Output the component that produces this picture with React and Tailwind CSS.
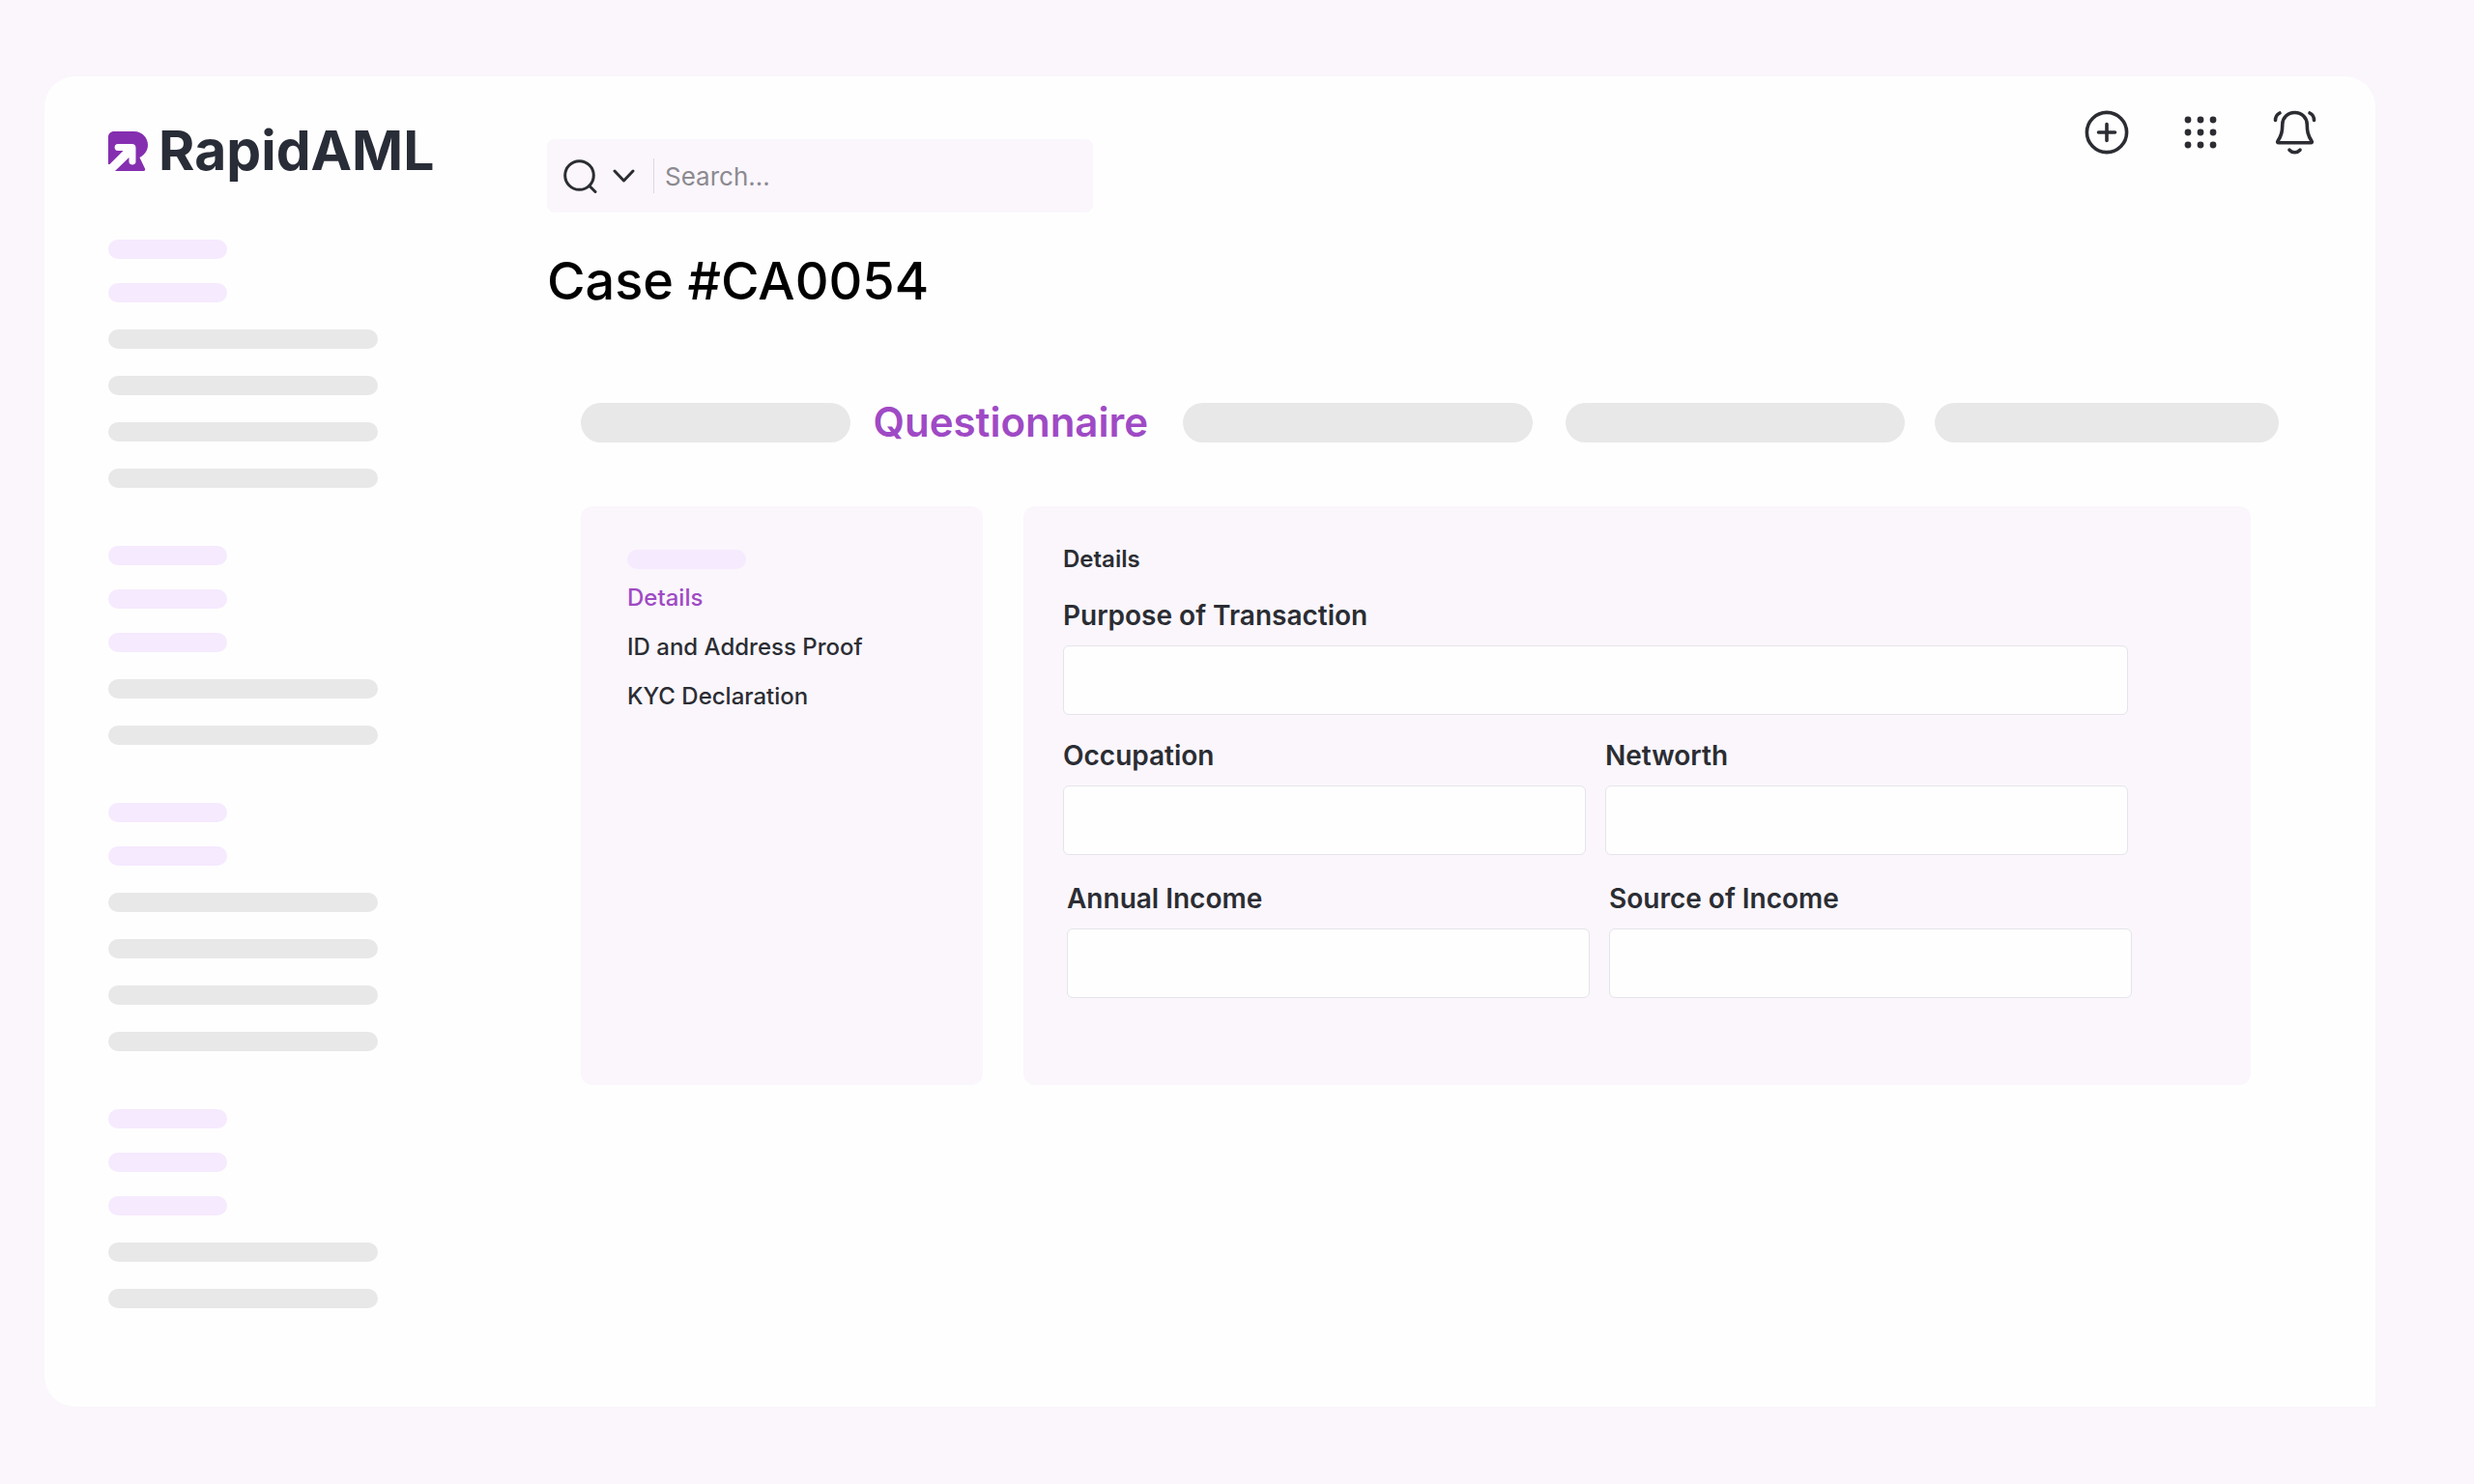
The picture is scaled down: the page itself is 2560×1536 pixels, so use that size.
import React, { useState } from 'react';

const MENU_GROUPS = [
  { short: 2, long: 4 },
  { short: 3, long: 2 },
  { short: 2, long: 4 },
  { short: 3, long: 2 },
];

const SECTIONS = ['Details', 'ID and Address Proof', 'KYC Declaration'];

const range = (n) => Array.from({ length: n }, (_, i) => i);

const Logo = () => (
  <div className="flex items-center gap-[11px]">
    <svg viewBox="0 0 41 41" className="w-[41px] h-[41px]" aria-hidden="true">
      <path
        d="M6 0H27C35 0 41 6.500 41 14C41 20 37.500 24.500 32.500 27L38 38.500C38.600 40 38 41 36.500 41H7L21.500 27V31.500C21.500 35.500 28.500 35.500 28.500 31.500V17C28.500 14.300 27 13 24.500 13H10C5.500 13 5.500 20 10 20H15.500L1.500 34H0V6C0 2.500 2.500 0 6 0Z"
        fill="#852fb0"
      />
    </svg>
    <span className="text-[57px] leading-[56px] font-bold text-[#292d37]">RapidAML</span>
  </div>
);

const Sidebar = () => (
  <aside className="w-[520px] shrink-0 pl-[66px] pt-[49px]">
    <Logo />
    <div className="mt-16 flex flex-col gap-[60px]">
      {MENU_GROUPS.map((group, g) => (
        <div key={g} className="flex flex-col gap-7">
          <div className="flex flex-col gap-[25px]">
            {range(group.short).map((i) => (
              <div key={i} className="w-[123px] h-5 rounded-full bg-[#f6eafe]" />
            ))}
          </div>
          {range(group.long).map((i) => (
            <div key={i} className="w-[279px] h-5 rounded-full bg-[#e8e8e8]" />
          ))}
        </div>
      ))}
    </div>
  </aside>
);

const SearchBar = () => (
  <div className="mt-[31px] w-[565px] h-[76px] rounded-lg bg-[#faf6fc] flex items-center pl-4">
    <button aria-label="Search" className="text-[#2b2d33]">
      <svg viewBox="0 0 36 36" className="w-9 h-9" fill="none" stroke="currentColor" strokeWidth="3" strokeLinecap="round">
        <circle cx="17.500" cy="17.500" r="14.800" />
        <path d="M28 28.500L34 34.500" />
      </svg>
    </button>
    <button aria-label="Search filter" className="ml-4 text-[#2b2d33]">
      <svg viewBox="0 0 24 14" className="w-6 h-3.5" fill="none" stroke="currentColor" strokeWidth="3" strokeLinecap="round" strokeLinejoin="round">
        <path d="M2 2L11.500 12L21 2" />
      </svg>
    </button>
    <div className="ml-[18px] w-px h-9 bg-[#dcd6e2]" />
    <input
      type="text"
      aria-label="Search"
      placeholder="Search..."
      className="ml-[11px] flex-1 min-w-0 bg-transparent text-[26px] text-[#2b2d33] placeholder-[#8c8a90] outline-none"
    />
  </div>
);

const HeaderActions = () => (
  <div className="flex gap-[49px] text-[#2b2d33]">
    <button aria-label="Add">
      <svg viewBox="0 0 48 48" className="w-12 h-12" fill="none" stroke="currentColor" strokeWidth="3.600" strokeLinecap="round">
        <circle cx="24" cy="24" r="20.600" />
        <path d="M24 15.500V32.500M15.500 24H32.500" />
      </svg>
    </button>
    <button aria-label="Apps">
      <svg viewBox="0 0 48 48" className="w-12 h-12" fill="currentColor">
        {[11, 24, 37].map((y) => [11, 24, 37].map((x) => <circle key={`${x}-${y}`} cx={x} cy={y} r="3.400" />))}
      </svg>
    </button>
    <button aria-label="Notifications">
      <svg viewBox="0 0 48 48" className="w-12 h-12" fill="none" stroke="currentColor" strokeWidth="3.600" strokeLinecap="round" strokeLinejoin="round">
        <path d="M24.500 3.500C17 3.500 12 9 11.800 15.500C11.600 23 11 27 7 33C6.300 34.200 6.700 34.800 8 34.800H41C42.300 34.800 42.700 34.200 42 33C38 27 37.400 23 37.200 15.500C37 9 32 3.500 24.500 3.500Z" />
        <path d="M19 42.200C22 45.500 27 45.500 30 42.200" />
        <path d="M9 4C6 5.500 4.500 8 4.500 11.500" />
        <path d="M40 4C43 5.500 44.500 8 44.500 11.500" />
      </svg>
    </button>
  </div>
);

const Tabs = () => (
  <nav className="mt-[90px] pl-[35px] pr-10 flex items-center">
    <div className="flex-[278] h-[41px] rounded-full bg-[#e8e8e8]" />
    <button className="mx-6 text-[42px] leading-[48px] font-semibold text-[#9f4ac5]">Questionnaire</button>
    <div className="ml-3 flex-[361] h-[41px] rounded-full bg-[#e8e8e8]" />
    <div className="ml-[34px] flex-[351] h-[41px] rounded-full bg-[#e8e8e8]" />
    <div className="ml-[31px] flex-[355] h-[41px] rounded-full bg-[#e8e8e8]" />
  </nav>
);

const SectionList = ({ active, onSelect }) => (
  <div className="w-[416px] shrink-0 rounded-xl bg-[#faf6fc] pl-12 pt-[45px]">
    <div className="w-[123px] h-5 rounded-full bg-[#f6eafe]" />
    <div className="mt-[14px] flex flex-col items-start gap-[19px]">
      {SECTIONS.map((s) => (
        <button
          key={s}
          onClick={() => onSelect(s)}
          className={`text-[24px] leading-8 font-medium ${active === s ? 'text-[#9f4ac5]' : 'text-[#2b2d33]'}`}
        >
          {s}
        </button>
      ))}
    </div>
  </div>
);

const Field = ({ id, label }) => (
  <div className="flex-1 min-w-0 flex flex-col gap-[13px]">
    <label htmlFor={id} className="text-[28px] leading-9 font-semibold text-[#2b2d33]">
      {label}
    </label>
    <input
      id={id}
      type="text"
      className="w-full h-[72px] rounded-md border border-[#e6e4ea] bg-[#fefefe] px-4 text-[24px] outline-none"
    />
  </div>
);

const DetailsForm = () => (
  <form className="flex-1 min-w-0 rounded-xl bg-[#faf6fc] pt-[39px] pb-[90px]">
    <h2 className="pl-[41px] text-[24px] leading-8 font-semibold text-[#2b2d33]">Details</h2>
    <div className="mt-6 pl-[41px] pr-[127px] flex">
      <Field id="purpose" label="Purpose of Transaction" />
    </div>
    <div className="mt-6 pl-[41px] pr-[127px] flex gap-5">
      <Field id="occupation" label="Occupation" />
      <Field id="networth" label="Networth" />
    </div>
    <div className="mt-[27px] pl-[45px] pr-[123px] flex gap-5">
      <Field id="annual-income" label="Annual Income" />
      <Field id="source-of-income" label="Source of Income" />
    </div>
  </form>
);

const App = () => {
  const [section, setSection] = useState(SECTIONS[0]);

  return (
    <div className="min-h-screen flex flex-col bg-[#faf6fc] pt-[79px] pb-20 pl-[46px] pr-[102px] font-['Inter',sans-serif]">
      <div className="flex-1 flex rounded-[32px] rounded-br-none bg-[#fefefe]">
        <Sidebar />
        <main className="flex-1 min-w-0 pt-[34px] pr-[60px]">
          <header className="flex items-start justify-between">
            <SearchBar />
            <HeaderActions />
          </header>
          <h1 className="mt-[39px] text-[54px] leading-[64px] font-medium text-black">Case #CA0054</h1>
          <Tabs />
          <div className="mt-[63px] pl-[35px] pr-[69px] flex gap-[42px]">
            <SectionList active={section} onSelect={setSection} />
            <DetailsForm />
          </div>
        </main>
      </div>
    </div>
  );
};

export default App;
